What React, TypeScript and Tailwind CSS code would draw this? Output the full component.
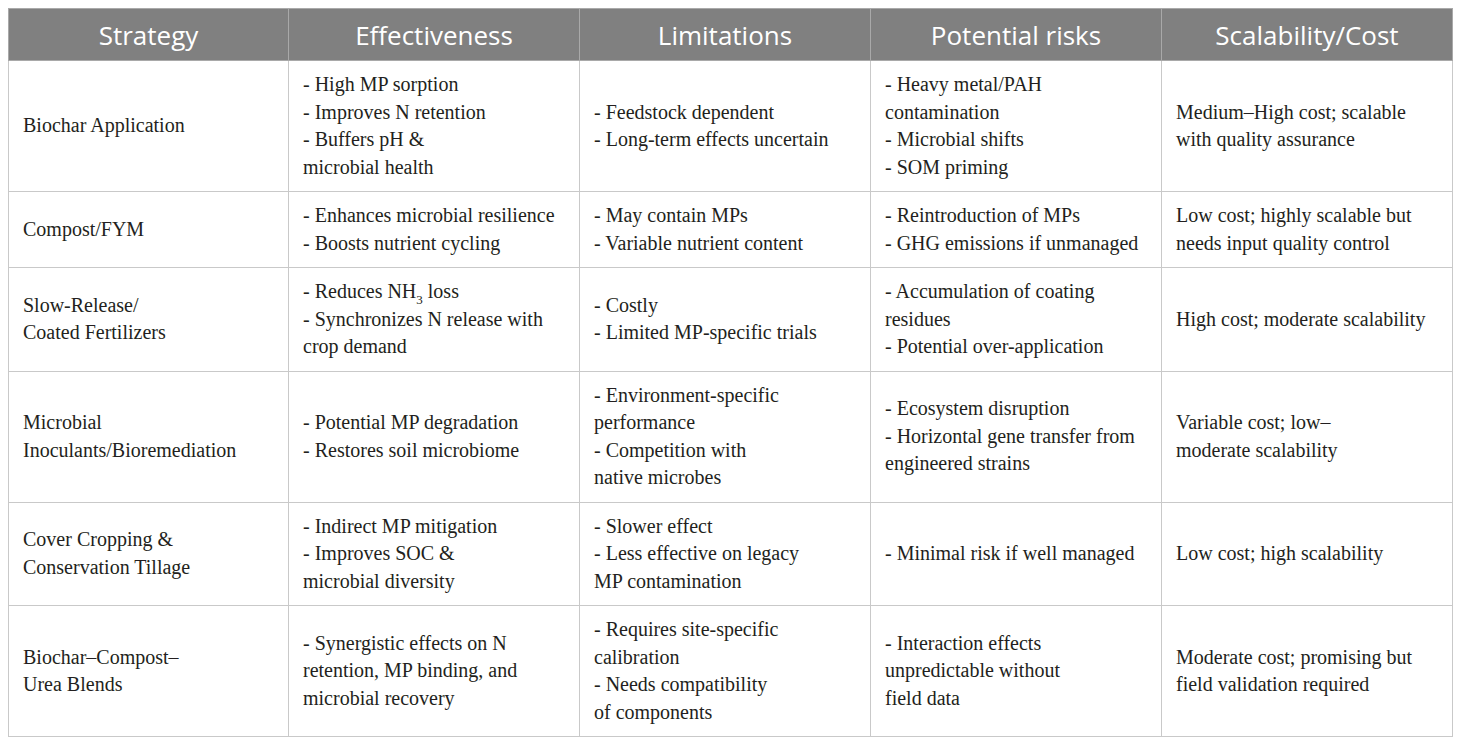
import React from "react";

type Cell = React.ReactNode[];

const rows: { strategy: string[]; cells: Cell[] }[] = [
  {
    strategy: ["Biochar Application"],
    cells: [
      ["- High MP sorption", "- Improves N retention", "- Buffers pH &", "microbial health"],
      ["- Feedstock dependent", "- Long-term effects uncertain"],
      ["- Heavy metal/PAH", "contamination", "- Microbial shifts", "- SOM priming"],
      ["Medium–High cost; scalable", "with quality assurance"],
    ],
  },
  {
    strategy: ["Compost/FYM"],
    cells: [
      ["- Enhances microbial resilience", "- Boosts nutrient cycling"],
      ["- May contain MPs", "- Variable nutrient content"],
      ["- Reintroduction of MPs", "- GHG emissions if unmanaged"],
      ["Low cost; highly scalable but", "needs input quality control"],
    ],
  },
  {
    strategy: ["Slow-Release/", "Coated Fertilizers"],
    cells: [
      [
        <>
          - Reduces NH<sub className="text-[13px] align-[-3px] leading-none">3</sub> loss
        </>,
        "- Synchronizes N release with",
        "crop demand",
      ],
      ["- Costly", "- Limited MP-specific trials"],
      ["- Accumulation of coating", "residues", "- Potential over-application"],
      ["High cost; moderate scalability"],
    ],
  },
  {
    strategy: ["Microbial", "Inoculants/Bioremediation"],
    cells: [
      ["- Potential MP degradation", "- Restores soil microbiome"],
      ["- Environment-specific", "performance", "- Competition with", "native microbes"],
      ["- Ecosystem disruption", "- Horizontal gene transfer from", "engineered strains"],
      ["Variable cost; low–", "moderate scalability"],
    ],
  },
  {
    strategy: ["Cover Cropping &", "Conservation Tillage"],
    cells: [
      ["- Indirect MP mitigation", "- Improves SOC &", "microbial diversity"],
      ["- Slower effect", "- Less effective on legacy", "MP contamination"],
      ["- Minimal risk if well managed"],
      ["Low cost; high scalability"],
    ],
  },
  {
    strategy: ["Biochar–Compost–", "Urea Blends"],
    cells: [
      ["- Synergistic effects on N", "retention, MP binding, and", "microbial recovery"],
      ["- Requires site-specific", "calibration", "- Needs compatibility", "of components"],
      ["- Interaction effects", "unpredictable without", "field data"],
      ["Moderate cost; promising but", "field validation required"],
    ],
  },
];

const headers = ["Strategy", "Effectiveness", "Limitations", "Potential risks", "Scalability/Cost"];
const widths = ["w-[280px]", "w-[291px]", "w-[291px]", "w-[291px]", "w-[291px]"];

function Lines({ lines }: { lines: React.ReactNode[] }) {
  return (
    <>
      {lines.map((l, i) => (
        <div key={i} className="whitespace-nowrap h-[27.5px]">
          {l}
        </div>
      ))}
    </>
  );
}

export default function App() {
  return (
    <div className="w-[1460px] h-[744px] bg-white p-2">
      <table className="border-collapse table-fixed w-[1444px] border border-[#c9c9c9]">
        <thead>
          <tr className="bg-[#808080] h-[52px]">
            {headers.map((h, i) => (
              <th
                key={h}
                className={`${widths[i]} border border-[#a9a9a9] text-white font-normal text-[26px] leading-none text-center font-['Open_Sans',sans-serif]`}
              >
                {h}
              </th>
            ))}
          </tr>
        </thead>
        <tbody className="font-['Liberation_Serif',serif] text-[20px] leading-[27.5px] text-[#231f20]">
          {rows.map((r, ri) => (
            <tr key={ri}>
              <td className="border border-[#c9c9c9] px-[14px] py-[10px] align-middle">
                <Lines lines={r.strategy} />
              </td>
              {r.cells.map((c, ci) => (
                <td key={ci} className="border border-[#c9c9c9] px-[14px] py-[10px] align-middle">
                  <Lines lines={c} />
                </td>
              ))}
            </tr>
          ))}
        </tbody>
      </table>
    </div>
  );
}
